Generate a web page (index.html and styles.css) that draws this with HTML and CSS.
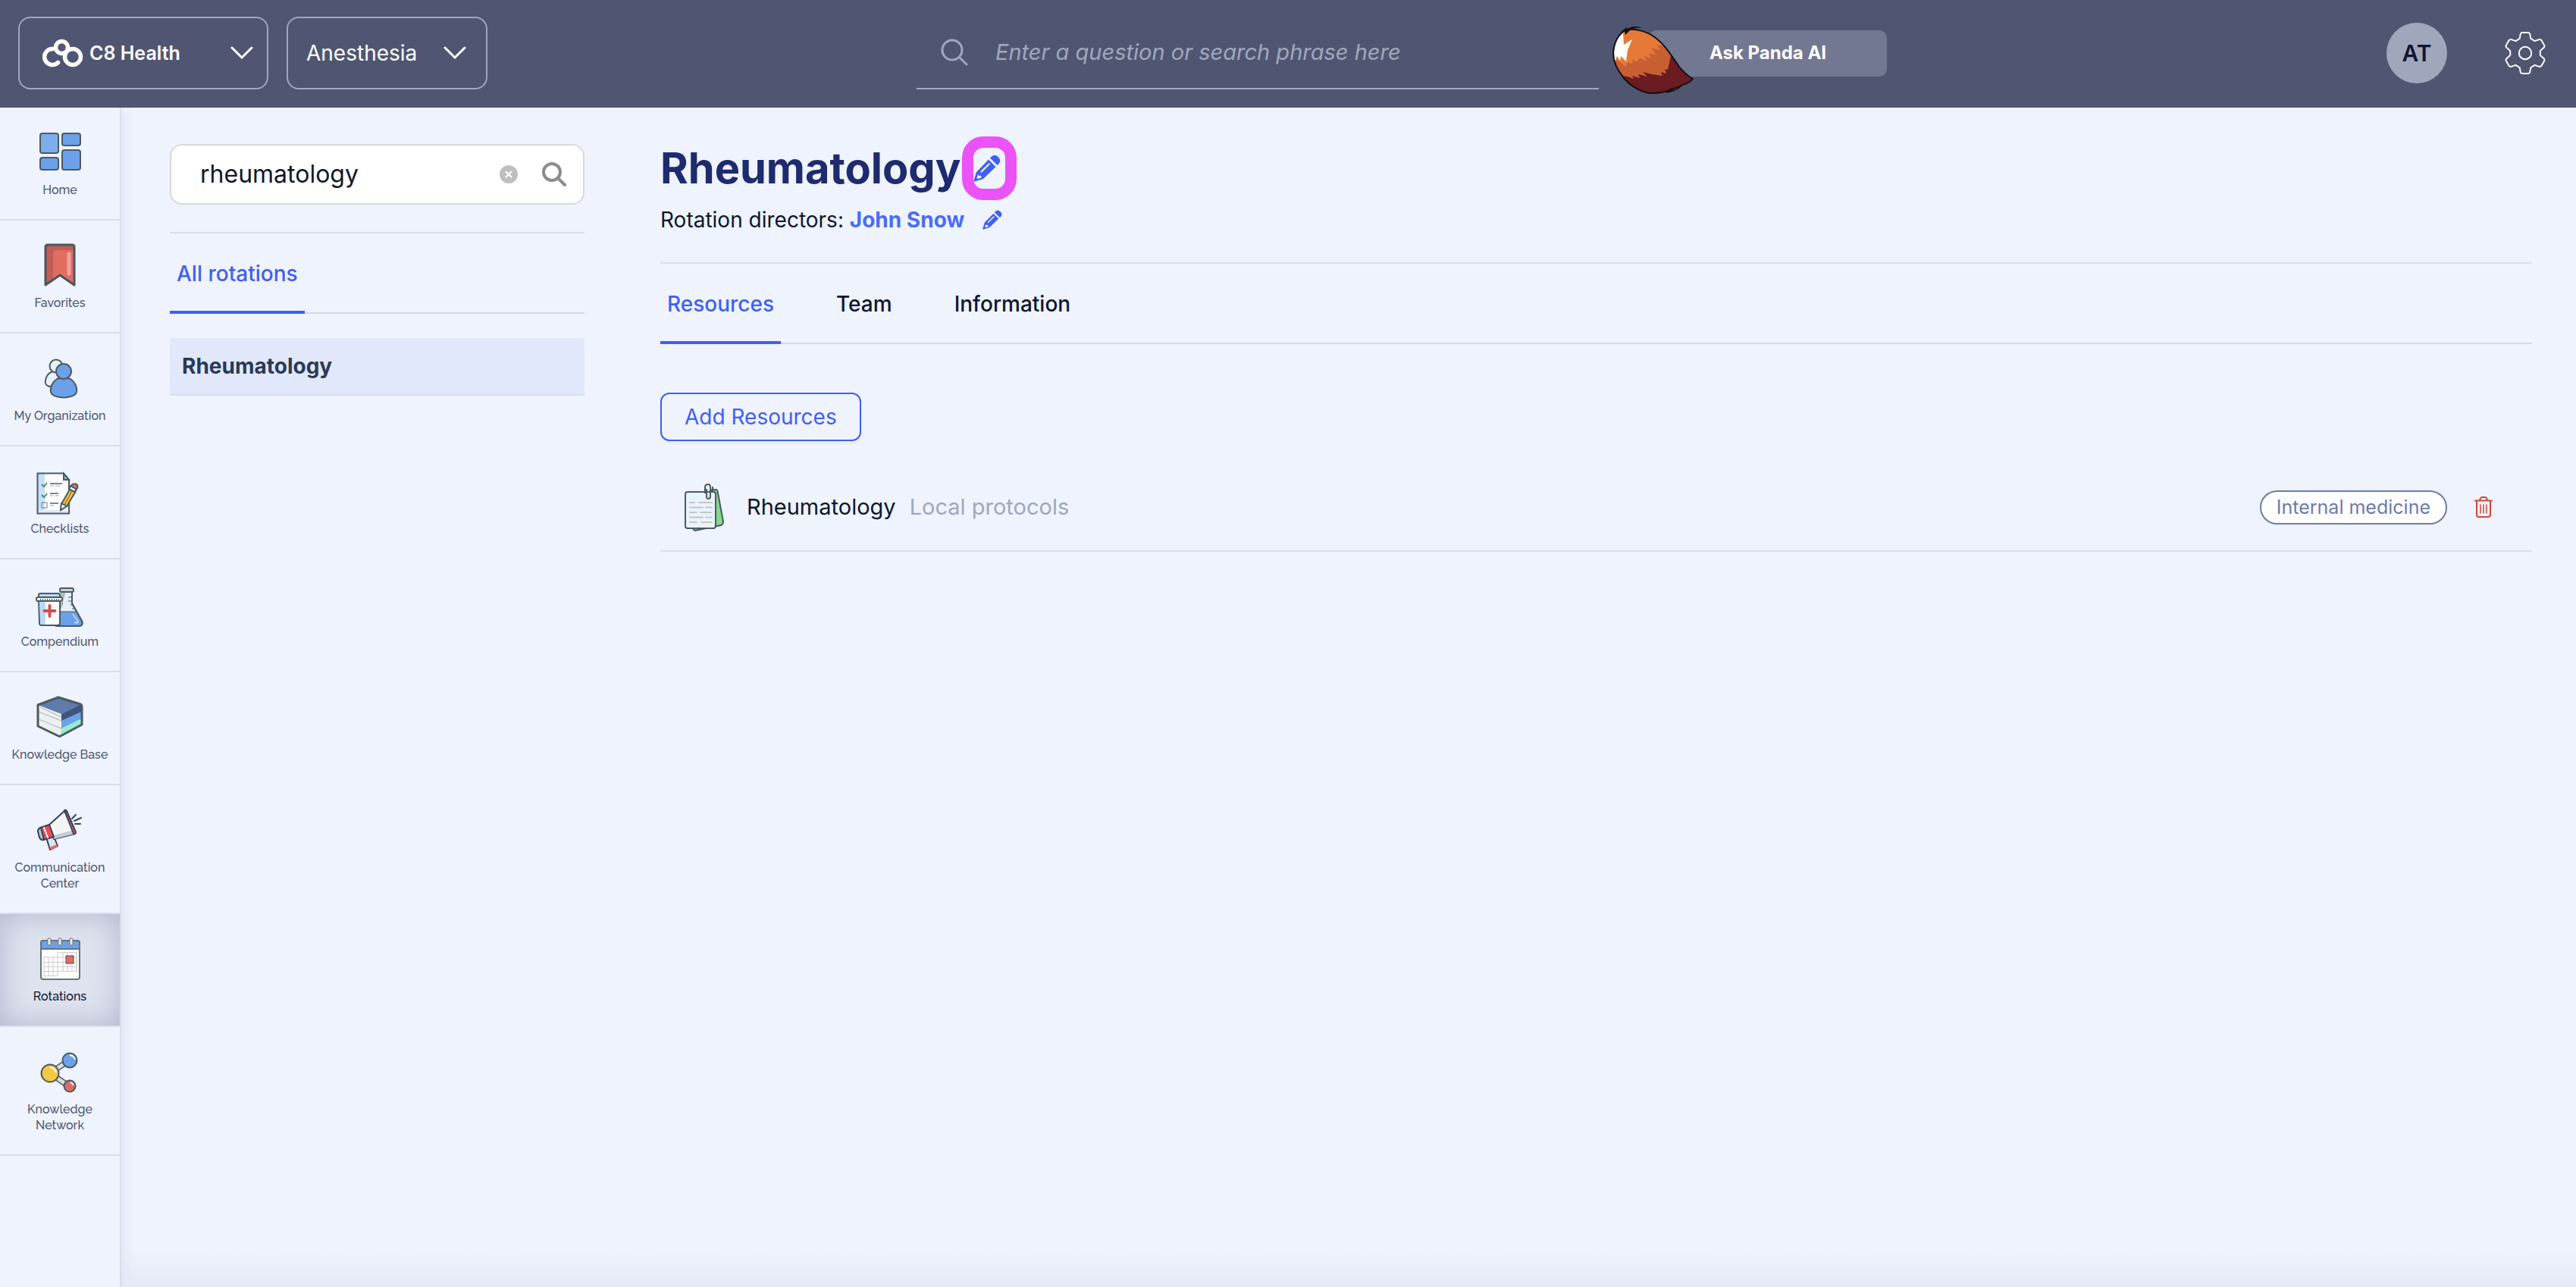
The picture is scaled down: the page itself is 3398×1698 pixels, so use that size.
FILE: index.html
```html
<!DOCTYPE html>
<html lang="en">
<head>
<meta charset="utf-8">
<meta name="viewport" content="width=device-width, initial-scale=1">
<title>Rheumatology – Rotations</title>
<link rel="stylesheet" href="styles.css">
</head>
<body>
<header class="topbar">
  <div class="topbar-left">
    <button class="picker picker-org" type="button">
      <svg class="logo" viewBox="0 0 54 38" fill="none" stroke="#fff" stroke-width="5.500" stroke-linecap="round">
        <circle cx="40" cy="24" r="10.500"/>
        <path d="M20.500 31.500A10.500 10.500 0 1 1 14 13.500"/>
        <circle cx="25.500" cy="11.500" r="8"/>
      </svg>
      <span class="brand">C8 Health</span>
      <svg class="chevron" viewBox="0 0 30 18"><path d="M2 2l13 13L28 2"/></svg>
    </button>
    <button class="picker picker-dept" type="button">
      <span>Anesthesia</span>
      <svg class="chevron" viewBox="0 0 30 18"><path d="M2 2l13 13L28 2"/></svg>
    </button>
  </div>
  <div class="topbar-center">
    <label class="ask">
      <svg class="ask-icon" viewBox="0 0 36 36" fill="none" stroke="#a0a7bd" stroke-width="3" stroke-linecap="round"><circle cx="15" cy="15" r="13"/><path d="M25 25l9 9"/></svg>
      <input class="ask-input" type="text" aria-label="Search" placeholder="Enter a question or search phrase here">
    </label>
    <button class="panda" type="button">
      <svg class="tail" viewBox="0 0 110 94">
        <path d="M17 9C26 4 46 8 59 18C72 28 78 39 90 56Q98 66 108 72Q104 77 97 79Q88 84 80 86C70 90 62 91 54 91C42 91 26 82 17 71C8 60 3 50 3 38C4 24 9 15 17 9z" fill="#6b1c22"/>
        <path d="M17 9C26 4 46 8 59 18C70 27 74 33 79 41L75 60L71 59L73 65L66 63L68 68L54 66L42 63L48 69L36 66L38 71L28 68L30 72L22 69L15 68C8 60 3 50 3 38C4 24 9 15 17 9z" fill="#c85f33"/>
        <path d="M17 9C26 4 46 8 59 18C64 22 68 26 70 29L61 27L64 34L53 31L59 40L50 38L53 45L44 42L47 49L38 44L34 50L29 46L28 52L22 50L20 56L12 50L4 46C2 36 6 16 17 9z" fill="#e57a38"/>
        <path d="M16 11C7 18 2 30 5 50L8 42L12 48L13 42L20 49L22 34L28 20L17 27z" fill="#fff"/>
        <path d="M17 9C26 4 46 8 59 18C72 28 78 39 90 56Q98 66 108 72Q104 77 97 79Q88 84 80 86C70 90 62 91 54 91C42 91 26 82 17 71C8 60 3 50 3 38C4 24 9 15 17 9z" fill="none" stroke="#111" stroke-width="2"/>
        <path d="M12 11L22 3L20 7Q30 0 41 5Q31 4 25 8L19 14L18 9zM72 91Q77 84 82 84L78 87L86 86L94 78L91 84Q84 89 72 91z" fill="#111"/>
      </svg>
      <span>Ask Panda AI</span>
    </button>
  </div>
  <div class="topbar-right">
    <button class="avatar" type="button">AT</button>
    <button class="icon-btn" type="button" aria-label="Settings">
      <svg class="gear" viewBox="0 0 56 60" fill="none" stroke="#fff" stroke-width="2" stroke-linejoin="round"><path d="M24 2H32Q34 2 34.500 4L35.500 10L41 13.500L47 11.500Q49 11 50.500 13L54 19Q55 21 53.500 22.500L48.500 27V33L53.500 37.500Q55 39 54 41L50.500 47Q49 49 47 48.500L41 46.500L35.500 50L34.500 56Q34 58 32 58H24Q22 58 21.500 56L20.500 50L15 46.500L9 48.500Q7 49 5.500 47L2 41Q1 39 2.500 37.500L7.500 33V27L2.500 22.500Q1 21 2 19L5.500 13Q7 11 9 11.500L15 13.500L20.500 10L21.500 4Q22 2 24 2z"/><circle cx="28" cy="30" r="8.500"/></svg>
    </button>
  </div>
</header>

<div class="shell">
  <nav class="sidebar">
    <a class="nav-item" href="#">
      <svg class="nav-icon" viewBox="0 0 64 64" stroke="#4c5b63" stroke-width="2" fill="#6ba1e8"><rect x="6" y="6" width="24" height="26" rx="3" fill="#7caeee"/><rect x="35" y="6" width="24" height="16" rx="3"/><rect x="6" y="38" width="24" height="16" rx="3"/><rect x="35" y="28" width="24" height="26" rx="3"/></svg>
      <span>Home</span>
    </a>
    <a class="nav-item" href="#">
      <svg class="nav-icon" viewBox="0 0 64 64"><path d="M13 57V7Q13 4 16 4H48Q51 4 51 7V57L32 44z" fill="#e06c62"/><path d="M13 57V5H50V11H28Q23 11 23 16V51z" fill="#c25d55"/><path d="M44 16V42" stroke="#eea39c" stroke-width="5" stroke-linecap="round"/><path d="M13 57V7Q13 4 16 4H48Q51 4 51 7V57L32 44z" fill="none" stroke="#475760" stroke-width="3" stroke-linejoin="round"/></svg>
      <span>Favorites</span>
    </a>
    <a class="nav-item" href="#">
      <svg class="nav-icon" viewBox="0 0 64 64" stroke="#4c5b63" stroke-width="2" fill="#e6f1fc"><path d="M24 22C16 23 12 31 13 38C14 41 19 43 24 42L34 24z"/><circle cx="27" cy="15" r="8.500"/><path d="M28 32Q37 28 46 32C52 36 55 43 54 49C52 59 22 59 20 49C19 43 22 36 28 32z" fill="#6ba1e8"/><circle cx="37" cy="22" r="10" fill="#6ba1e8"/></svg>
      <span>My Organization</span>
    </a>
    <a class="nav-item" href="#">
      <svg class="nav-icon" viewBox="0 0 64 64" fill="none"><path d="M2 8H37L44 16V61H2z" fill="#fff"/><path d="M3 8H12V60H3z" fill="#c7dffa"/><path d="M3 56H44V61H3z" fill="#dfeaf7"/><path d="M2.500 7.500H37L44 16V60.500H2.500z" stroke="#4c5b63" stroke-width="2"/><path d="M37 8V16H44z" fill="#a9b4bb" stroke="#4c5b63" stroke-width="2"/><path d="M8 22l3 3 4-5M8 36l3 3 4-5" stroke="#3f9b46" stroke-width="2"/><rect x="8" y="46" width="7" height="7" stroke="#777" stroke-width="1"/><path d="M19 21H35M19 34H30M19 47H30" stroke="#555f66" stroke-width="1.500"/><path d="M19 24H24M26 24H32M19 37H24M26 37H31M19 50H24" stroke="#9aa2a8" stroke-width="1"/><path d="M34 48L46 27L53 31L41 51L33 56z" fill="#f3c13a" stroke="#4c5b63" stroke-width="2" stroke-linejoin="round"/><path d="M34 47L41 51L33 56z" fill="#fff" stroke="#4c5b63" stroke-width="2"/><path d="M38 49L49 29" stroke="#4c5b63" stroke-width="1"/><path d="M44 28L46.500 24L54 28L51.500 32z" fill="#fff" stroke="#4c5b63" stroke-width="2"/><path d="M46.500 24Q50 20 54 22Q57 25 54 28.500z" fill="#ee6a66" stroke="#4c5b63" stroke-width="2"/></svg>
      <span>Checklists</span>
    </a>
    <a class="nav-item" href="#">
      <svg class="nav-icon" viewBox="0 0 64 64" fill="none" stroke="#4c5b63" stroke-width="2" stroke-linejoin="round"><path d="M35 14V30L30 42V60H58Q63 59 61 54L48 30V14z" fill="#e6eef8"/><path d="M33 14H40L33 38z" fill="#b5bcc2" stroke="none"/><path d="M32 41H54L61 55Q62 59 58 60H32z" fill="#6ba1e8" stroke-width="1"/><path d="M48 14V30L61.500 54Q63 59 58 60H26"/><rect x="32" y="10" width="18" height="5" rx="2" fill="#c3d4d4"/><path d="M43 22H48M43 27H48M46 32H50M48 37H52" stroke-width="1"/><path d="M49 44L56 54Q56 57 51 55" stroke="#b9d4f8"/><path d="M4 24H32V56Q32 59 29 59H8Q5 59 5 56z" fill="#fff"/><path d="M6 26H13V58H8Q6 58 6 56z" fill="#b9d9f8" stroke="none"/><path d="M4 22V19Q4 17 6 17H30Q32 17 32 19V22" fill="#b9d9f8"/><rect x="1" y="22" width="34" height="5" rx="2" fill="#fff"/><path d="M6 25H32" stroke-dasharray="1 2"/><path d="M18.500 33V47M11.500 40H25.500" stroke="#d1504d" stroke-width="4" stroke-linecap="round"/></svg>
      <span>Compendium</span>
    </a>
    <a class="nav-item" href="#">
      <svg class="nav-icon" viewBox="0 0 64 64"><path d="M30 5L61 14V42L32 57L3 43V14z" fill="#eceff0"/><path d="M34 46L61 33V43L33 56z" fill="#93edd0"/><path d="M34 36L61 24V33L34 46z" fill="#6ba1e8"/><path d="M34 27L61 13V24L34 36z" fill="#3e5580"/><path d="M30 5L61 14L34 27L3 15z" fill="#5f7bab"/><path d="M4 24L34 36M4 34L34 46M6 18L34 31" stroke="#a8b0b5" stroke-width="1" fill="none"/><path d="M30 5L59 14Q61 15 61 17V41L33 56Q32 57 30 56L3 43V15z" fill="none" stroke="#4c5b63" stroke-width="3" stroke-linejoin="round"/></svg>
      <span>Knowledge Base</span>
    </a>
    <a class="nav-item" href="#">
      <svg class="nav-icon" viewBox="0 0 64 64" stroke="#34435e" stroke-width="2" stroke-linejoin="round" stroke-linecap="round"><path d="M14 41L23 37L29 52L19 57z" fill="#dde3ea"/><path d="M18 54L28 50L29 53L20 57z" fill="#ee6a66" stroke="none"/><path d="M17 25L38 6L52 36L24 43z" fill="#f4f4f4"/><path d="M24 38L50 31L52 36L24 43z" fill="#c5ccd6" stroke="none"/><path d="M38 5Q40 4 41 6L53 34Q53 37 50 36z" fill="#ee5b5f"/><path d="M6 28L18 24L24 40L10 44z" fill="#e84c55"/><path d="M11 28L16 41" stroke="#fff"/><path d="M3 33Q3 29 7 28L11 44Q7 45 5 41z" fill="#b9c3d2"/><path d="M48 16L53 11M51 19L60 15M52 23H59" fill="none"/></svg>
      <span>Communication Center</span>
    </a>
    <a class="nav-item nav-active" href="#" aria-current="page">
      <svg class="nav-icon" viewBox="0 0 64 64" fill="none" stroke="#66757d" stroke-width="2"><rect x="7" y="7" width="51" height="51" rx="3" fill="#fff"/><path d="M7 18V10Q7 7 10 7H55Q58 7 58 10V18z" fill="#6ba1e8"/><path d="M11 29H54M11 35.500H54M11 41.500H54M11 47.500H29M11 53.500H29M30 22.500H54V47.500H11M11 29V54M17 29V54M23 29V54M29 22V54M36 22V47M42 22V47M48 22V47M54 22V47" stroke="#cdcdcd" stroke-width="1"/><rect x="40" y="27" width="10" height="10" fill="#e06c62" stroke="#5b4a4a" stroke-width="1"/><g fill="#eee" stroke-width="1"><rect x="16" y="4" width="4" height="9" rx="1"/><rect x="30" y="4" width="4" height="9" rx="1"/><rect x="45" y="4" width="4" height="9" rx="1"/></g></svg>
      <span>Rotations</span>
    </a>
    <a class="nav-item" href="#">
      <svg class="nav-icon" viewBox="0 0 64 64" stroke="#4c5b63" stroke-width="2"><path d="M19 33L44 16M19 33L44 50" stroke-width="8"/><path d="M19 33L44 16M19 33L44 50" stroke="#dedede" stroke-width="5"/><circle cx="19" cy="33" r="11.500" fill="#f5c842"/><circle cx="45" cy="16" r="9.500" fill="#6ba1e8"/><circle cx="45" cy="50" r="7.500" fill="#e06c62"/><path d="M19 25Q25 26 27 32M45 9Q51 10 52 15M46 45Q49 46 50 49" fill="none" stroke="#fff"/></svg>
      <span>Knowledge Network</span>
    </a>
  </nav>

  <aside class="rotations">
    <div class="filter">
      <input class="filter-input" type="text" aria-label="Filter rotations" value="rheumatology">
      <button class="icon-btn" type="button" aria-label="Clear"><svg class="clear" viewBox="0 0 24 24"><circle cx="12" cy="12" r="12" fill="#bfbfbf"/><path d="M8 8l8 8M16 8l-8 8" stroke="#fff" stroke-width="2"/></svg></button>
      <button class="icon-btn" type="button" aria-label="Search"><svg class="find" viewBox="0 0 32 32" fill="none" stroke="#8c8c8c" stroke-width="4" stroke-linecap="round"><circle cx="13" cy="13" r="11"/><path d="M21 21l9 9"/></svg></button>
    </div>
    <div class="tabs tabs-side">
      <button class="tab tab-on" type="button">All rotations</button>
    </div>
    <a class="rotation" href="#">Rheumatology</a>
  </aside>

  <main class="content">
    <div class="title-row">
      <h1>Rheumatology</h1>
      <button class="edit-ring" type="button" aria-label="Edit rotation">
        <svg class="pencil pencil-lg" viewBox="0 0 36 36"><path d="M24 2.500Q28-1 32 2.500L33.500 4Q37 8 33.500 12L31.500 14L22 4.500z"/><path fill-rule="evenodd" d="M20 6.500L29.500 16L13 32L1.500 35.500Q0 36 .500 34L4 23zM20.500 11L9 22.500L10.500 24L22 12.500zM6 26L4.500 31L6 32L11 30L9.500 27.500L7 28z"/></svg>
      </button>
    </div>
    <div class="directors">
      <span>Rotation directors: <a href="#">John Snow</a></span>
      <button class="icon-btn" type="button" aria-label="Edit directors">
        <svg class="pencil" viewBox="0 0 36 36"><path d="M24 2.500Q28-1 32 2.500L33.500 4Q37 8 33.500 12L31.500 14L22 4.500z"/><path fill-rule="evenodd" d="M20 6.500L29.500 16L13 32L1.500 35.500Q0 36 .500 34L4 23zM20.500 11L9 22.500L10.500 24L22 12.500zM6 26L4.500 31L6 32L11 30L9.500 27.500L7 28z"/></svg>
      </button>
    </div>
    <div class="tabs">
      <button class="tab tab-on" type="button">Resources</button>
      <button class="tab" type="button">Team</button>
      <button class="tab" type="button">Information</button>
    </div>
    <button class="add" type="button">Add Resources</button>
    <div class="resource">
      <svg class="doc" viewBox="0 0 52 64" fill="none" stroke="#4c5b63" stroke-width="2" stroke-linejoin="round"><path d="M36 9H41Q43 9 43.500 11L51 51Q51 55 48 56L14 63Q11 62 10 58z" fill="#84d98a"/><rect x="1" y="12" width="40" height="48" rx="3" fill="#e9f3fd"/><path d="M7 26H13M19 26H36M7 32.500H24M28 32.500H36M7 39H16M21 39H36M7 45.500H24M28 45.500H36M7 52H16M22 52H36" stroke="#c6c6c6" stroke-linecap="round"/><path d="M27 14V6Q27 2 31 2Q34 2 34 6V18Q34 21 31.500 21Q29 21 29 18V8M37 5V12" stroke-width="2"/></svg>
      <a class="resource-name" href="#">Rheumatology</a>
      <span class="resource-type">Local protocols</span>
      <span class="chip">Internal medicine</span>
      <button class="icon-btn" type="button" aria-label="Delete">
        <svg class="trash" viewBox="0 0 24 28" fill="none" stroke="#d5463a" stroke-width="2" stroke-linecap="round"><path d="M1 5.500H23M7 5Q8 1 10 1H14Q16 1 17 5M3 6V24Q3 27 6 27H18Q21 27 21 24V6"/><path d="M8 11V22M12 11V22M16 11V22" stroke-width="1.500"/></svg>
      </button>
    </div>
  </main>
</div>
</body>
</html>
```
FILE: styles.css
```css
* {
  box-sizing: border-box;
}

body {
  margin: 0;
  min-height: 100vh;
  display: flex;
  flex-direction: column;
  background: #eef3fe;
  color: #10162f;
  font-family: Inter, "Liberation Sans", sans-serif;
  font-size: 28px;
  line-height: 44px;
}

button,
input {
  font: inherit;
  color: inherit;
  border: 0;
  padding: 0;
  background: none;
}

button {
  cursor: pointer;
}

a {
  color: inherit;
  text-decoration: none;
}

svg {
  display: block;
  flex: none;
}

.icon-btn {
  display: flex;
}

/* Top bar */
.topbar {
  position: relative;
  z-index: 1;
  display: grid;
  grid-template-columns: 15fr auto 11fr;
  align-items: center;
  height: 142px;
  padding: 0 40px 2px 24px;
  background: #505672;
  color: #fff;
}

.topbar-left,
.topbar-right,
.topbar-center {
  display: flex;
  align-items: center;
}

.topbar-left {
  gap: 24px;
}

.picker {
  display: flex;
  align-items: center;
  height: 96px;
  padding: 0 18px 0 30px;
  border: 2px solid #a0a7bd;
  border-radius: 16px;
}

.picker-org {
  width: 330px;
}

.picker-dept {
  width: 265px;
  padding: 0 26px 0 24px;
}

.logo {
  width: 54px;
  height: 38px;
  margin-right: 8px;
}

.brand {
  font-size: 25px;
  font-weight: 600;
}

.chevron {
  width: 30px;
  height: 18px;
  margin-left: auto;
  fill: none;
  stroke: #fff;
  stroke-width: 3;
  stroke-linecap: round;
}

.topbar-center {
  gap: 18px;
}

.ask {
  display: flex;
  align-items: center;
  gap: 36px;
  width: 900px;
  height: 96px;
  padding-left: 32px;
  border-bottom: 2px solid #a0a7bd;
}

.ask-icon {
  width: 36px;
  height: 36px;
}

.ask-input {
  flex: 1;
  min-width: 0;
  font-size: 29px;
  outline: 0;
}

.ask-input::placeholder {
  color: #a0a7bd;
  font-style: italic;
  opacity: 1;
}

.panda {
  position: relative;
  width: 314px;
  height: 61px;
  margin-left: 48px;
  border-radius: 10px;
  background: #737892;
  font-size: 24px;
  font-weight: 700;
}

.tail {
  position: absolute;
  left: -50px;
  top: -8px;
  width: 110px;
  height: 94px;
}

.topbar-right {
  justify-content: flex-end;
  gap: 76px;
}

.avatar {
  width: 80px;
  height: 80px;
  border-radius: 50%;
  background: #a0a7bd;
  color: #10162f;
  font-size: 30px;
  font-weight: 600;
}

.gear {
  width: 54px;
  height: 58px;
}

/* Page */
.shell {
  flex: 1;
  display: flex;
  background: linear-gradient(to top, #e6e9f5, #eef3fe 50px);
}

.sidebar {
  flex: none;
  width: 160px;
  border-right: 2px solid #dadeea;
  background: #eef3fe;
  box-shadow: 4px 0 16px #e1e4f3;
}

.nav-item {
  display: flex;
  flex-direction: column;
  align-items: center;
  gap: 6px;
  padding: 28px 8px;
  border-bottom: 2px solid #dadeea;
  color: #505672;
  font-family: Raleway, Lato, sans-serif;
  font-size: 16px;
  font-weight: 500;
  line-height: 21px;
  text-align: center;
}

.nav-icon {
  width: 64px;
  height: 64px;
}

.nav-active {
  background: #dfe3ef;
  box-shadow: inset 0 0 40px #b0b4ca;
  color: #10162f;
}

.rotations {
  flex: none;
  width: 547px;
  margin: 48px 100px 0 64px;
}

.filter {
  display: flex;
  align-items: center;
  height: 80px;
  padding: 0 22px 0 38px;
  border: 2px solid #d9d9d9;
  border-radius: 16px;
  background: #fff;
}

.filter-input {
  flex: 1;
  min-width: 0;
  font-size: 32px;
  outline: 0;
}

.clear {
  width: 24px;
  height: 24px;
  margin-right: 32px;
}

.find {
  width: 32px;
  height: 32px;
}

.tabs {
  display: flex;
  gap: 64px;
  height: 108px;
  border-top: 2px solid #dadeea;
  border-bottom: 2px solid #d9d9d9;
}

.tabs-side {
  margin-top: 36px;
}

.tab {
  height: 106px;
  padding: 4px 9px 0;
  border-bottom: 4px solid transparent;
  font-weight: 500;
}

.tab-on {
  border-color: #3f5ff5;
  color: #3f5ff5;
}

.rotation {
  display: block;
  margin-top: 32px;
  padding: 15px 16px;
  border-bottom: 2px solid #dadeea;
  background: #e2e8fc;
  color: #2a3a55;
  font-weight: 700;
}

/* Rotation details */
.content {
  flex: 1;
  min-width: 0;
  padding: 38px 58px 0 0;
}

.title-row {
  display: flex;
  align-items: center;
  gap: 2px;
}

h1 {
  margin: 0;
  color: #1e2b6f;
  font-size: 56px;
  font-weight: 700;
  line-height: 80px;
}

.edit-ring {
  display: flex;
  align-items: center;
  width: 72px;
  height: 84px;
  border: 15px solid #eb52f7;
  border-radius: 28px;
}

.pencil {
  width: 26px;
  height: 26px;
  fill: #3f5ff5;
}

.pencil-lg {
  width: 36px;
  height: 36px;
}

.directors {
  display: flex;
  align-items: center;
  gap: 24px;
  margin: 4px 0 34px;
}

.directors a {
  color: #4a6cf7;
  font-weight: 700;
}

.add {
  display: block;
  height: 64px;
  margin: 64px 0 28px;
  padding: 0 30px;
  border: 2px solid #3f5ff5;
  border-radius: 12px;
  box-shadow: 0 4px 0 #e9eefa;
  color: #3f5ff5;
}

.resource {
  display: flex;
  align-items: center;
  height: 118px;
  padding: 2px 52px 0 32px;
  border-bottom: 2px solid #dadeea;
}

.doc {
  width: 52px;
  height: 64px;
  margin-right: 30px;
}

.resource-name {
  margin-right: 18px;
  font-size: 29px;
}

.resource-type {
  color: #a0a7bd;
  font-size: 29px;
}

.chip {
  margin: 0 36px 0 auto;
  padding: 0 20px;
  border: 2px solid #6a7cae;
  border-radius: 23px;
  background: #fff;
  color: #6a7cae;
  font-size: 25px;
  line-height: 41px;
}

.trash {
  width: 24px;
  height: 28px;
}
```
